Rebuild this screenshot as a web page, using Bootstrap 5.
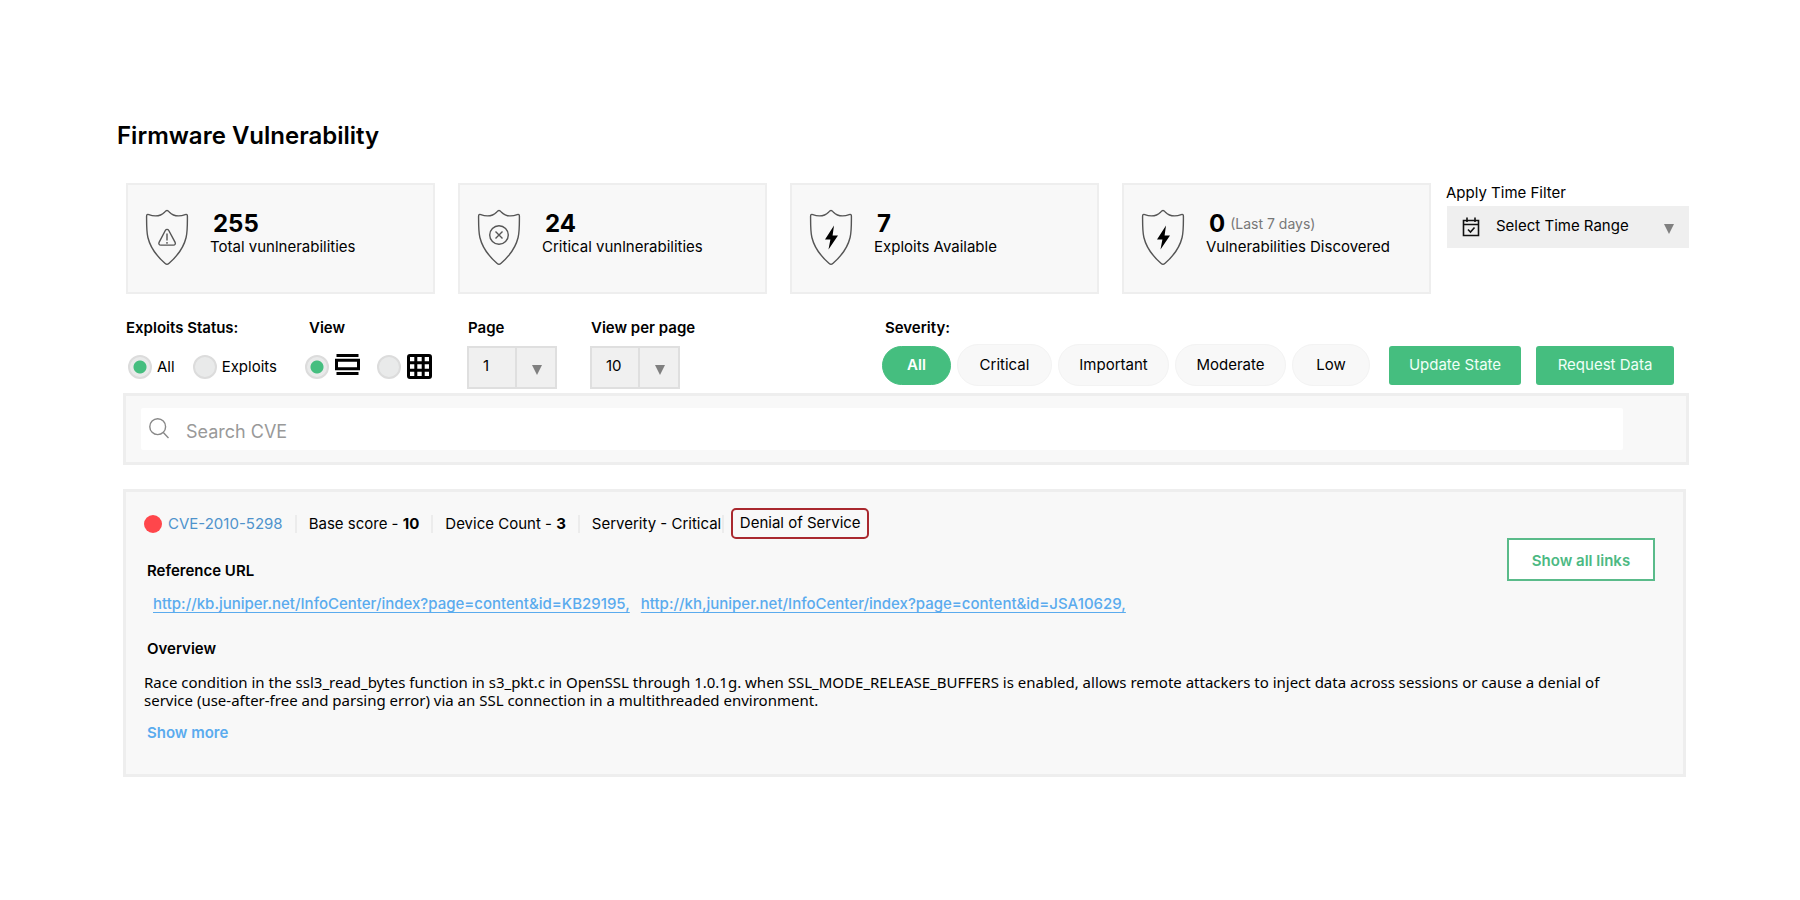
<!DOCTYPE html>
<html lang="en">
<head>
<meta charset="utf-8">
<meta name="viewport" content="width=device-width, initial-scale=1">
<title>Firmware Vulnerability</title>
<link href="https://cdn.jsdelivr.net/npm/bootstrap@5.3.0/dist/css/bootstrap.min.css" rel="stylesheet">
<style>
  :root { --fw-green: #45be7f; --fw-panel: #f8f8f8; --fw-line: #eeeeee; --fw-link: #5aabee; }
  body { font-family: Inter, "Liberation Sans", sans-serif; font-size: 15px; line-height: 18px; color: #000; background: #fff; }
  .page { padding: 118px 111px 40px 123px; }
  h1 { font-size: 24px; line-height: 36px; font-weight: 600; margin: 0 0 29px -6px; }
  h2 { font-size: 15px; line-height: 18px; font-weight: 600; margin: 0; }
  .stats { display: grid; grid-template-columns: repeat(4, 1fr) 235px; column-gap: 23px; padding-left: 3px; }
  .stats > :last-child { margin-left: -8px; }
  .stat { background: var(--fw-panel); border: 2px solid var(--fw-line); min-height: 111px; padding: 24px 0 0 17px; }
  .stat svg { width: 44px; height: 57px; flex: none; }
  .stat-text { padding-left: 21px; }
  .stat-num { font-size: 24px; line-height: 29px; font-weight: 700; padding-left: 3px; }
  .stat-note { color: #777; padding-left: 5px; font-size: 14px; }
  .filter-label { line-height: 20px; margin-bottom: 3px; display: block; }
  .range { background: #efefef; height: 42px; margin-left: 1px; }
  .range svg { margin: 0 16px 0 15px; flex: none; }
  .pick { appearance: none; border: 0; background: transparent; color: #000; font-size: 15px; outline-offset: 2px;
    background-image: url("data:image/svg+xml,%3Csvg xmlns='http://www.w3.org/2000/svg' width='10' height='10'%3E%3Cpath d='M0 0h10L5 10z' fill='%23808080'/%3E%3C/svg%3E");
    background-repeat: no-repeat; }
  .range .pick { background-position: right 15px top 18px; height: 42px; padding-bottom: 2px; }
  .pick-box { width: 90px; height: 43px; margin-left: -1px; border: 2px solid #dfdfdf; padding: 0 0 3px 14px; background-color: #f0f0f0;
    background-image: url("data:image/svg+xml,%3Csvg xmlns='http://www.w3.org/2000/svg' width='10' height='10'%3E%3Cpath d='M0 0h10L5 10z' fill='%23808080'/%3E%3C/svg%3E"), linear-gradient(#dfdfdf, #dfdfdf);
    background-position: right 13px top 17px, 46px 0; background-size: 10px 10px, 2px 100%; }
  .controls { padding: 25px 15px 0 3px; }
  fieldset, .field { min-width: 0; flex: none; }
  .f-status { width: 183px; } .f-view { width: 159px; } .f-page { width: 123px; }
  legend, .field > label { font-size: 15px; line-height: 18px; font-weight: 600; margin: 0; float: none; display: block; }
  .line-box { height: 43px; margin-top: 9px; display: flex; align-items: center; }
  .radios { height: 41px; padding-left: 2px; }
  .f-view .radios { margin-left: -6px; }
  .dot { appearance: none; width: 24px; height: 24px; margin: 0 5px 0 0; border: 2px solid #dcdcdc; border-radius: 50%; background: #e9eaea; flex: none; }
  .dot:checked { background: radial-gradient(circle, var(--fw-green) 6px, #e9eaea 7px); }
  label + .dot { margin-left: 18px; }
  .f-view .dot { margin-right: 6px; }
  .f-view label + .dot { margin-left: 17px; }
  .pills { gap: 6px; margin-top: 7px; }
  .pill { height: 42px; border: 1px solid #f3f3f3; border-radius: 21px; background: var(--fw-panel); color: #000; padding: 0; }
  .pill.on { height: 39px; background: var(--fw-green); border-color: var(--fw-green); color: #fff; font-weight: 600; }
  .act { height: 39px; border: 0; border-radius: 3px; background: var(--fw-green); color: #f0fff7; padding: 0; margin-left: 9px; }
  .pill + .act { margin-left: 13px; }
  .w-a { width: 69px; } .w-b { width: 95px; } .w-c { width: 111px; } .w-d { width: 78px; } .w-e { width: 132px; } .w-f { width: 138px; }
  .panel { background: var(--fw-panel); border: 3px solid var(--fw-line); }
  .search { margin-top: 4px; padding: 12px 63px 12px 15px; }
  .search label { padding: 0 17px 2px 8px; display: flex; }
  .search-in { background: #fff; height: 42px; border-radius: 2px; }
  .search input { border: 0; flex: 1; font-size: 18px; height: 42px; padding: 4px 0 0; background: transparent; }
  .search input::placeholder { color: #999; opacity: 1; }
  .cve { margin: 24px 3px 0 0; padding: 16px 28px 32px 18px; }
  .red { width: 18px; height: 18px; border-radius: 50%; background: #ff464b; margin-right: 6px; }
  .meta > * { white-space: nowrap; flex: none; }
  .sep { width: 2px; height: 18px; background: #ececec; margin: 0 12px; }
  .sep.tight { margin: 0 7px 0 1px; }
  .tag { border: 2px solid #a9282e; border-radius: 5px; height: 31px; width: 138px; line-height: 26px; text-align: center; }
  .cve-id { color: #4f93cc; text-decoration: none; }
  .ref { margin: 23px 0 0 3px; }
  .urls { gap: 11px; margin: 14px 0 27px 9px; font-weight: 500; }
  .urls a { color: var(--fw-link); text-underline-offset: 3px; text-decoration-thickness: 1px; }
  .over { margin-left: 3px; }
  .summary { margin: 15px 28px 15px 0; font-family: "Noto Sans", "Liberation Sans", sans-serif; }
  .show-links { width: 148px; height: 43px; flex: none; border: 2px solid #5abb8a; border-radius: 0; background: #fff; color: #4cb983; font-weight: 600; padding: 2px 0 0; margin-top: 30px; }
  .more { display: inline-block; color: var(--fw-link); text-decoration: none; font-weight: 600; margin-left: 3px; }
</style>
</head>
<body>
<svg class="d-none">
  <symbol id="shield" viewBox="0 0 44 57"><path d="M22 1.500c.8 0 1.500.6 2.200 1.400 2.500 2.600 5.500 4 9.300 4 2.600 0 4.600-.5 6.700-1.300 1.300-.5 2.200 0 2.200 1.300 0 8.500.2 15.500-1.300 21.600C38.400 39.500 32.500 47 23.800 54.500c-1.300 1.200-2.300 1.200-3.600 0C11.500 47 5.600 39.500 2.900 28.500 1.400 22.400 1.600 15.400 1.600 6.900c0-1.300.9-1.800 2.200-1.300 2.100.8 4.100 1.300 6.700 1.300 3.800 0 6.800-1.400 9.300-4 .7-.8 1.400-1.400 2.200-1.400z" fill="none" stroke="#555" stroke-width="1.400"/></symbol>
  <symbol id="bolt" viewBox="0 0 44 57"><path d="M25 16.500 16 30.500h5.400L19.500 40.500l9.500-14h-5.400z" fill="#000"/></symbol>
</svg>
<main class="page">
  <h1>Firmware Vulnerability</h1>

  <section class="stats">
    <div class="stat d-flex">
      <svg viewBox="0 0 44 57" aria-hidden="true"><use href="#shield"/><path d="M20.300 21.500c.9-1.500 2.600-1.500 3.500 0l6.200 11.600c.9 1.700.1 3-1.700 3H15.900c-1.800 0-2.600-1.300-1.700-3zM22 24.500v7M22 33v1.700" fill="none" stroke="#555" stroke-width="1.400"/></svg>
      <div class="stat-text"><div class="stat-num">255</div><div>Total vunlnerabilities</div></div>
    </div>
    <div class="stat d-flex">
      <svg viewBox="0 0 44 57" aria-hidden="true"><use href="#shield"/><circle cx="22" cy="26" r="9.300" fill="none" stroke="#555" stroke-width="1.400"/><path d="M18.500 22.500l7 7M25.500 22.500l-7 7" stroke="#555" stroke-width="1.400"/></svg>
      <div class="stat-text"><div class="stat-num">24</div><div>Critical vunlnerabilities</div></div>
    </div>
    <div class="stat d-flex">
      <svg viewBox="0 0 44 57" aria-hidden="true"><use href="#shield"/><use href="#bolt"/></svg>
      <div class="stat-text"><div class="stat-num">7</div><div>Exploits Available</div></div>
    </div>
    <div class="stat d-flex">
      <svg viewBox="0 0 44 57" aria-hidden="true"><use href="#shield"/><use href="#bolt"/></svg>
      <div class="stat-text"><div class="d-flex align-items-center"><span class="stat-num">0</span><span class="stat-note">(Last 7 days)</span></div><div class="text-nowrap">Vulnerabilities Discovered</div></div>
    </div>
    <div>
      <label class="filter-label" for="range">Apply Time Filter</label>
      <div class="range d-flex align-items-center">
        <svg width="18" height="20" viewBox="0 0 18 20" fill="none" stroke="#111" stroke-width="1.600" aria-hidden="true"><path d="M1.500 3.500h15v15h-15zM1.500 7.500h15M5 .5v4.500M13 .5v4.500M6 12.500l2.500 2.500 4-4.500"/></svg>
        <select class="pick flex-grow-1" id="range"><option>Select Time Range</option></select>
      </div>
    </div>
  </section>

  <section class="controls d-flex">
    <fieldset class="f-status">
      <legend>Exploits Status:</legend>
      <div class="line-box radios">
        <input class="dot" type="radio" name="status" id="s1" checked><label for="s1">All</label>
        <input class="dot" type="radio" name="status" id="s2"><label for="s2">Exploits</label>
      </div>
    </fieldset>
    <fieldset class="f-view">
      <legend>View</legend>
      <div class="line-box radios">
        <input class="dot" type="radio" name="view" id="v1" checked aria-label="List view">
        <label for="v1"><svg class="d-block mb-1" width="25" height="21" viewBox="0 0 25 21" aria-hidden="true"><path d="M1.500 0h22v3h-22zM1.500 18h22v3h-22z"/><path d="M1.500 6.200h22v8.600h-22z" fill="none" stroke="#000" stroke-width="3"/></svg></label>
        <input class="dot" type="radio" name="view" id="v2" aria-label="Grid view">
        <label for="v2"><svg class="d-block" width="25" height="25" viewBox="0 0 25 25" fill="none" stroke="#000" stroke-width="3" aria-hidden="true"><rect x="1.500" y="1.500" width="22" height="22" rx="1.500"/><path d="M8.800 1v23M16.200 1v23M1 8.800h23M1 16.200h23"/></svg></label>
      </div>
    </fieldset>
    <div class="field f-page">
      <label for="pg">Page</label>
      <div class="line-box"><select class="pick pick-box" id="pg"><option>1</option></select></div>
    </div>
    <div class="field">
      <label for="per">View per page</label>
      <div class="line-box"><select class="pick pick-box" id="per"><option>10</option></select></div>
    </div>
    <div class="ms-auto">
      <h2 class="over">Severity:</h2>
      <div class="pills d-flex align-items-center">
        <button type="button" class="pill on w-a">All</button>
        <button type="button" class="pill w-b">Critical</button>
        <button type="button" class="pill w-c">Important</button>
        <button type="button" class="pill w-c">Moderate</button>
        <button type="button" class="pill w-d">Low</button>
        <button type="button" class="act w-e">Update State</button>
        <button type="button" class="act w-f">Request Data</button>
      </div>
    </div>
  </section>

  <form class="panel search">
    <div class="search-in d-flex align-items-center">
      <label for="q" aria-label="Search CVE"><svg width="20" height="21" viewBox="0 0 20 21" fill="none" stroke="#888" stroke-width="1.400" aria-hidden="true"><circle cx="8.700" cy="8.700" r="7.900"/><path d="M14.300 14.500l5.200 5.500"/></svg></label>
      <input id="q" type="text" placeholder="Search CVE">
    </div>
  </form>

  <article class="panel cve">
    <div class="d-flex justify-content-between">
      <div>
        <div class="meta d-flex align-items-center">
          <span class="red"></span><a class="cve-id" href="#">CVE-2010-5298</a>
          <span class="sep"></span><span>Base score - <b>10</b></span>
          <span class="sep"></span><span>Device Count - <b>3</b></span>
          <span class="sep"></span><span>Serverity - Critical</span>
          <span class="sep tight"></span><span class="tag">Denial of Service</span>
        </div>
        <h2 class="ref">Reference URL</h2>
      </div>
      <button type="button" class="show-links">Show all links</button>
    </div>
    <div class="urls d-flex flex-wrap"><a href="#">http://kb.juniper.net/InfoCenter/index?page=content&amp;id=KB29195,</a><a href="#">http://kh,juniper.net/InfoCenter/index?page=content&amp;id=JSA10629,</a></div>
    <h2 class="over">Overview</h2>
    <p class="summary">Race condition in the ssl3_read_bytes function in s3_pkt.c in OpenSSL through 1.0.1g. when SSL_MODE_RELEASE_BUFFERS is enabled, allows remote attackers to inject data across sessions or cause a denial of service (use-after-free and parsing error) via an SSL connection in a multithreaded environment.</p>
    <a class="more" href="#">Show more</a>
  </article>
</main>
<script src="https://cdn.jsdelivr.net/npm/bootstrap@5.3.0/dist/js/bootstrap.bundle.min.js"></script>
</body>
</html>
